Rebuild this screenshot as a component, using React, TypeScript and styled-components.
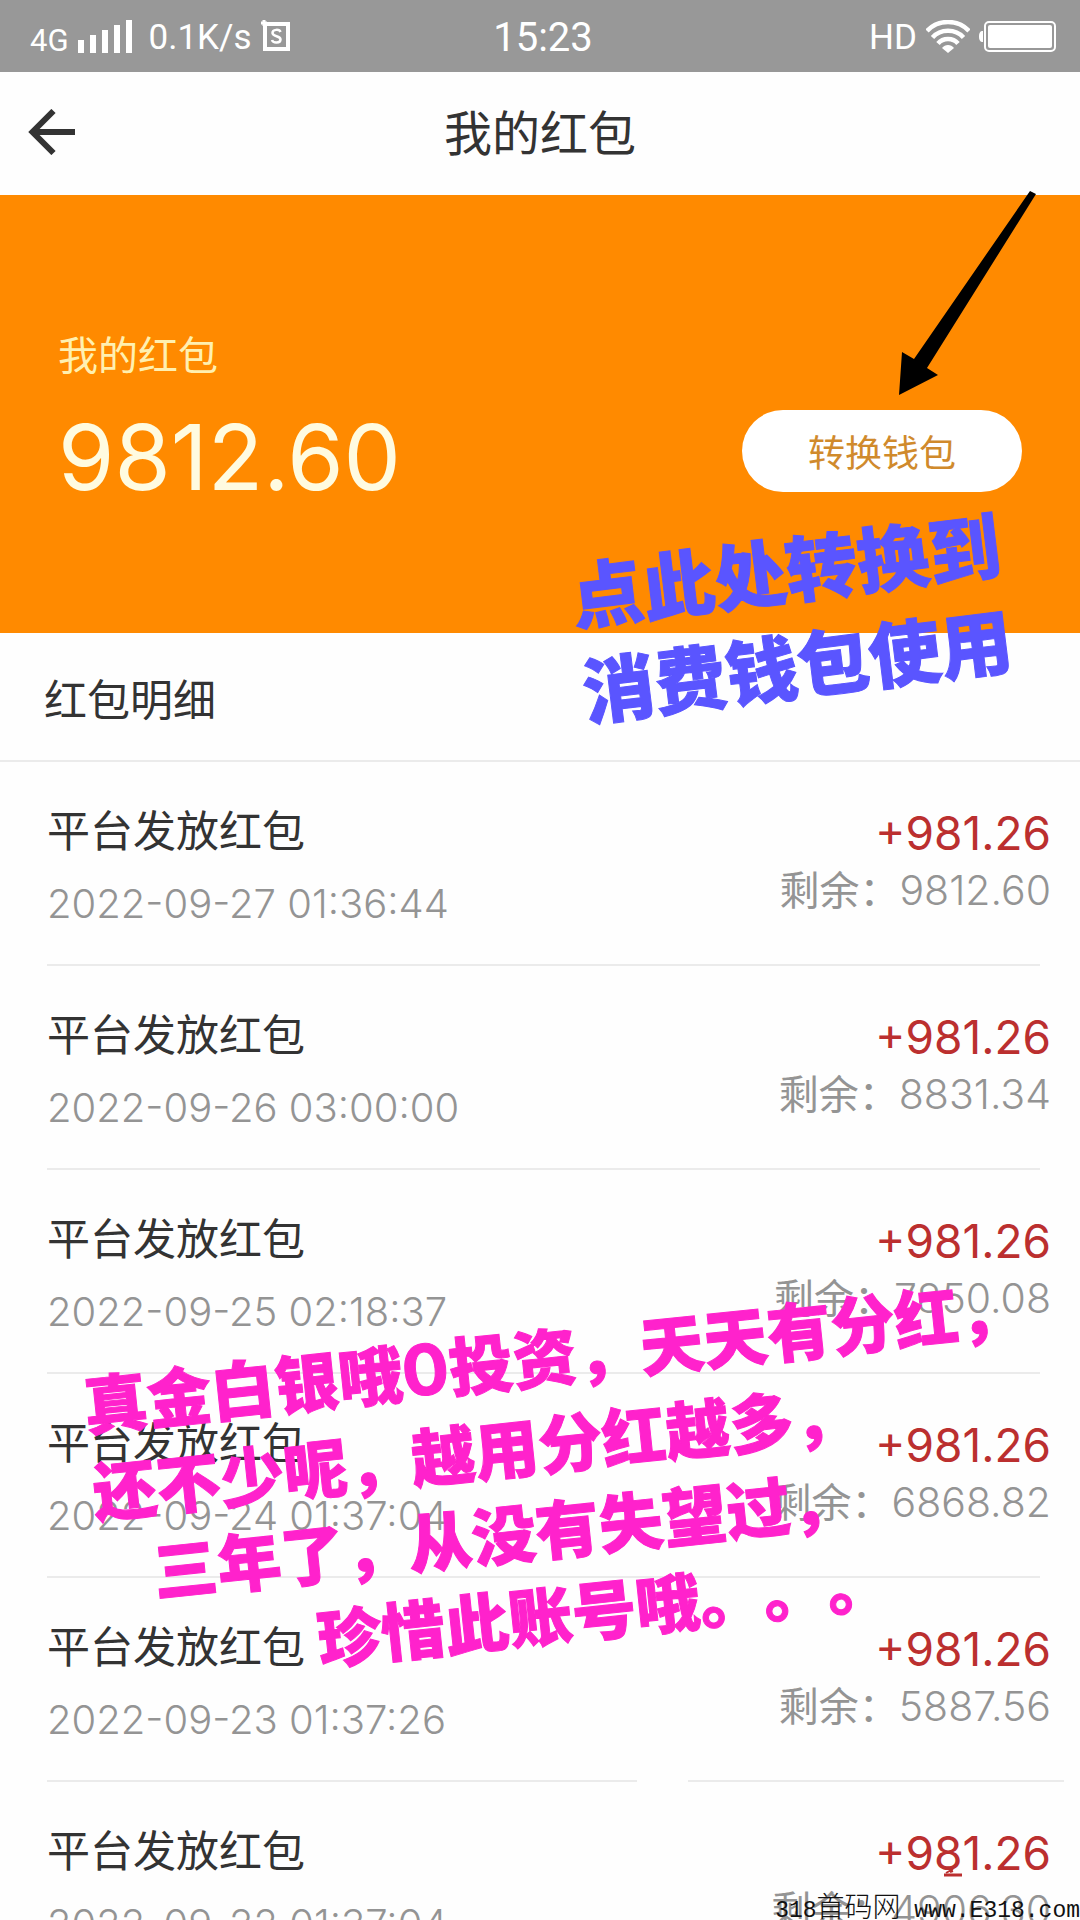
import React from "react";
import styled, { createGlobalStyle, css } from "styled-components";

const sans = `Inter, "Noto Sans CJK SC", sans-serif`;
const cjk = `"Noto Sans CJK SC", sans-serif`;

const GlobalStyle = createGlobalStyle`
  *, *::before, *::after { box-sizing: border-box; }
  body { margin: 0; background: #fefefe; }
  h1, h2, p, ul { margin: 0; padding: 0; font-weight: 400; }
`;

const Screen = styled.div`
  position: relative;
  display: flex;
  flex-direction: column;
  height: 100vh;
  overflow: hidden;
  background: #fefefe;
  color: #333;
  font-family: ${sans};
`;

const StatusBar = styled.div`
  flex: none;
  display: grid;
  grid-template-columns: 1fr auto 1fr;
  align-items: center;
  height: 72px;
  padding: 0 24px 0 30px;
  background: #989898;
  color: #fff;
  font-family: Roboto, sans-serif;
`;

const StatusGroup = styled.div<{ $end?: boolean }>`
  display: flex;
  align-items: center;
  justify-content: ${(p) => (p.$end ? "flex-end" : "flex-start")};
  gap: 9px;
`;

const StatusText = styled.span<{ $size: number }>`
  padding-top: 4px;
  font-size: ${(p) => p.$size}px;
  line-height: 40px;
`;

const Speed = styled(StatusText)`
  margin-left: 8px;
`;

const Network = styled.span`
  padding-top: 10px;
  font-size: 31px;
  line-height: 36px;
`;

const Header = styled.header`
  flex: none;
  display: grid;
  grid-template-columns: 1fr auto 1fr;
  align-items: center;
  height: 123px;
  padding: 0 28px 4px;
`;

const BackButton = styled.button`
  justify-self: start;
  display: flex;
  padding: 0;
  border: 0;
  background: none;
  color: #333;
`;

const Title = styled.h1`
  padding-bottom: 4px;
  font-family: ${cjk};
  font-size: 48px;
  line-height: 72px;
`;

const Balance = styled.section`
  flex: none;
  display: flex;
  align-items: flex-end;
  justify-content: space-between;
  height: 438px;
  padding: 0 58px 120px 58px;
  background: #ff8a00;
`;

const BalanceLabel = styled.p`
  font-family: ${cjk};
  font-size: 40px;
  line-height: 60px;
  color: #fff0b0;
`;

const BalanceValue = styled.p`
  margin-top: 18px;
  font-size: 91px;
  line-height: 112px;
  color: #fffbe0;
`;

const ConvertButton = styled.button`
  width: 280px;
  height: 82px;
  margin-bottom: 21px;
  border: 0;
  border-radius: 41px;
  background: #fff;
  color: #d08a2c;
  font-family: ${cjk};
  font-size: 37px;
`;

const SectionTitle = styled.h2`
  flex: none;
  height: 129px;
  padding: 0 44px;
  border-bottom: 2px solid #ebebeb;
  font-family: ${cjk};
  font-size: 43px;
  line-height: 128px;
`;

const List = styled.ul`
  flex: 1;
  min-height: 0;
  overflow-y: auto;
  scrollbar-width: none;
  list-style: none;
`;

const Row = styled.li<{ $broken?: boolean }>`
  display: flex;
  justify-content: space-between;
  height: 204px;
  margin: 0 40px 0 47px;
  border-bottom: 2px solid #ebebeb;
  ${(p) =>
    p.$broken &&
    css`
      margin-right: 16px;
      padding-right: 24px;
      border-image: linear-gradient(90deg, #ebebeb 58%, transparent 58% 63%, #ebebeb 63%) 2;
    `}
`;

const RowMain = styled.div`
  padding-top: 34px;
`;

const RowSide = styled.div`
  margin-right: -11px;
  padding-top: 43px;
  text-align: right;
`;

const RowTitle = styled.p`
  font-family: ${cjk};
  font-size: 43px;
  line-height: 64px;
`;

const RowTime = styled.time`
  display: block;
  margin-top: 20px;
  font-size: 40px;
  font-weight: 300;
  line-height: 48px;
  color: #949494;
`;

const Amount = styled.p`
  font-size: 46px;
  line-height: 56px;
  color: #bb2f2f;
`;

const Remaining = styled.p`
  font-size: 41px;
  font-weight: 300;
  line-height: 54px;
  color: #949494;
`;

const RemainingLabel = styled.span`
  font-family: ${cjk};
  font-size: 40px;
  font-weight: 400;
`;

const Arrow = styled.svg`
  position: absolute;
  top: 190px;
  left: 898px;
`;

const Scribble = styled.svg`
  position: absolute;
  top: 1868px;
  left: 942px;
`;

const Note = styled.div<{ $x: number; $y: number; $angle: number; $size: number; $line: number; $color: string }>`
  position: absolute;
  top: ${(p) => p.$y}px;
  left: ${(p) => p.$x}px;
  transform: rotate(${(p) => p.$angle}deg);
  transform-origin: 0 0;
  font-family: ${cjk};
  font-size: ${(p) => p.$size}px;
  font-weight: 900;
  line-height: ${(p) => p.$line}px;
  text-spacing-trim: space-all;
  -webkit-text-stroke: 1px ${(p) => p.$color};
  white-space: nowrap;
  color: ${(p) => p.$color};
  pointer-events: none;
`;

const NoteLine = styled.p<{ $indent?: number }>`
  padding-left: ${(p) => p.$indent ?? 0}px;
  font-weight: inherit;
`;

const NoteDigit = styled.span`
  font-family: Inter, sans-serif;
  font-size: 70px;
  font-weight: 700;
`;

const Watermark = styled.div`
  position: absolute;
  right: 0;
  bottom: 0;
  font-family: "Liberation Mono", monospace;
  font-size: 23px;
  line-height: 18px;
  white-space: nowrap;
  color: #111;
`;

const WatermarkName = styled.span`
  font-family: ${cjk};
  font-size: 28px;
  font-weight: 300;
`;

const records = [
  { time: "2022-09-27 01:36:44", left: "9812.60" },
  { time: "2022-09-26 03:00:00", left: "8831.34" },
  { time: "2022-09-25 02:18:37", left: "7850.08" },
  { time: "2022-09-24 01:37:04", left: "6868.82" },
  { time: "2022-09-23 01:37:26", left: "5887.56", broken: true },
  { time: "2022-09-22 01:37:04", left: "4906.30" },
];

const SignalIcon = () => (
  <svg width="54" height="33" viewBox="0 0 54 33" fill="#fff" aria-hidden="true">
    <path d="M0 20h6v13H0zM12 15h6v18h-6zM24 10h6v23h-6zM36 5h6v28h-6zM48 0h6v33h-6z" />
  </svg>
);

const SimBadge = () => (
  <svg width="30" height="32" viewBox="0 0 30 32" fill="none" stroke="#fff" aria-hidden="true">
    <path d="M4 4h23v25H4z" strokeWidth="4" />
    <path d="M0 3h6M3 0v6" strokeWidth="3" />
    <path d="M19.500 12c-1-3-8-3-8 1 0 4 8 2.500 8 6.500 0 4-7.500 4-8.500 0.500" strokeWidth="2.500" />
  </svg>
);

const WifiIcon = () => (
  <svg width="44" height="33" viewBox="0 0 44 33" fill="none" stroke="#fff" strokeWidth="4.500" aria-hidden="true">
    <path d="M1 11C12-1 32-1 43 11M6.500 17.500c8-9 23-9 31 0M12 23.500c5-6 15-6 20 0" />
    <path d="M16 28c3-4 9-4 12 0l-6 5z" fill="#fff" stroke="none" />
  </svg>
);

const BatteryIcon = () => (
  <svg width="77" height="31" viewBox="0 0 77 31" fill="none" aria-hidden="true">
    <path d="M4 10v11C1 21 0 19 0 15.500S1 10 4 10z" fill="#fff" />
    <rect x="6" y="1" width="70" height="29" rx="4" stroke="#fff" strokeWidth="2" />
    <rect x="9" y="4" width="64" height="23" rx="2" fill="#fff" />
  </svg>
);

const BackIcon = () => (
  <svg width="48" height="46" viewBox="0 0 48 46" fill="none" stroke="currentColor" strokeWidth="6" aria-hidden="true">
    <path d="M47 23H5M25.500 2L4.500 23l21 21" />
  </svg>
);

export default function App() {
  return (
    <Screen lang="zh-CN">
      <GlobalStyle />
      <StatusBar>
        <StatusGroup>
          <Network>4G</Network>
          <SignalIcon />
          <Speed $size={35}>0.1K/s</Speed>
          <SimBadge />
        </StatusGroup>
        <StatusText $size={40}>15:23</StatusText>
        <StatusGroup $end>
          <StatusText $size={35}>HD</StatusText>
          <WifiIcon />
          <BatteryIcon />
        </StatusGroup>
      </StatusBar>

      <Header>
        <BackButton type="button" aria-label="返回">
          <BackIcon />
        </BackButton>
        <Title>我的红包</Title>
      </Header>

      <Balance>
        <div>
          <BalanceLabel>我的红包</BalanceLabel>
          <BalanceValue>9812.60</BalanceValue>
        </div>
        <ConvertButton type="button">转换钱包</ConvertButton>
      </Balance>

      <SectionTitle>红包明细</SectionTitle>
      <List>
        {records.map((r) => (
          <Row key={r.time} $broken={r.broken}>
            <RowMain>
              <RowTitle>平台发放红包</RowTitle>
              <RowTime>{r.time}</RowTime>
            </RowMain>
            <RowSide>
              <Amount>+981.26</Amount>
              <Remaining>
                <RemainingLabel>剩余：</RemainingLabel>
                {r.left}
              </Remaining>
            </RowSide>
          </Row>
        ))}
      </List>

      <Arrow width="140" height="206" viewBox="0 0 140 206" aria-hidden="true">
        <path d="M1 205L4 162l12 7L132 1l6 3L29 178l11 7z" fill="#000" />
      </Arrow>
      <Scribble width="22" height="10" viewBox="0 0 22 10" fill="none" stroke="#bb2f2f" aria-hidden="true">
        <path d="M11 1L4 5M8 4l3-1" strokeWidth="2" />
        <path d="M2 7h18" strokeWidth="3" />
      </Scribble>
      <Note $x={565} $y={546} $angle={-7} $size={72} $line={96} $color="#5a55ff">
        <NoteLine>点此处转换到</NoteLine>
        <NoteLine>消费钱包使用</NoteLine>
      </Note>
      <Note $x={79} $y={1361} $angle={-6} $size={64} $line={85} $color="#ff22cc">
        <NoteLine>
          真金白银哦<NoteDigit>0</NoteDigit>投资，天天有分红，
        </NoteLine>
        <NoteLine>还不少呢，越用分红越多，</NoteLine>
        <NoteLine $indent={52}>三年了，从没有失望过，</NoteLine>
        <NoteLine $indent={208}>珍惜此账号哦。。。</NoteLine>
      </Note>
      <Watermark>
        318<WatermarkName>首码网</WatermarkName> www.E318.com
      </Watermark>
    </Screen>
  );
}
